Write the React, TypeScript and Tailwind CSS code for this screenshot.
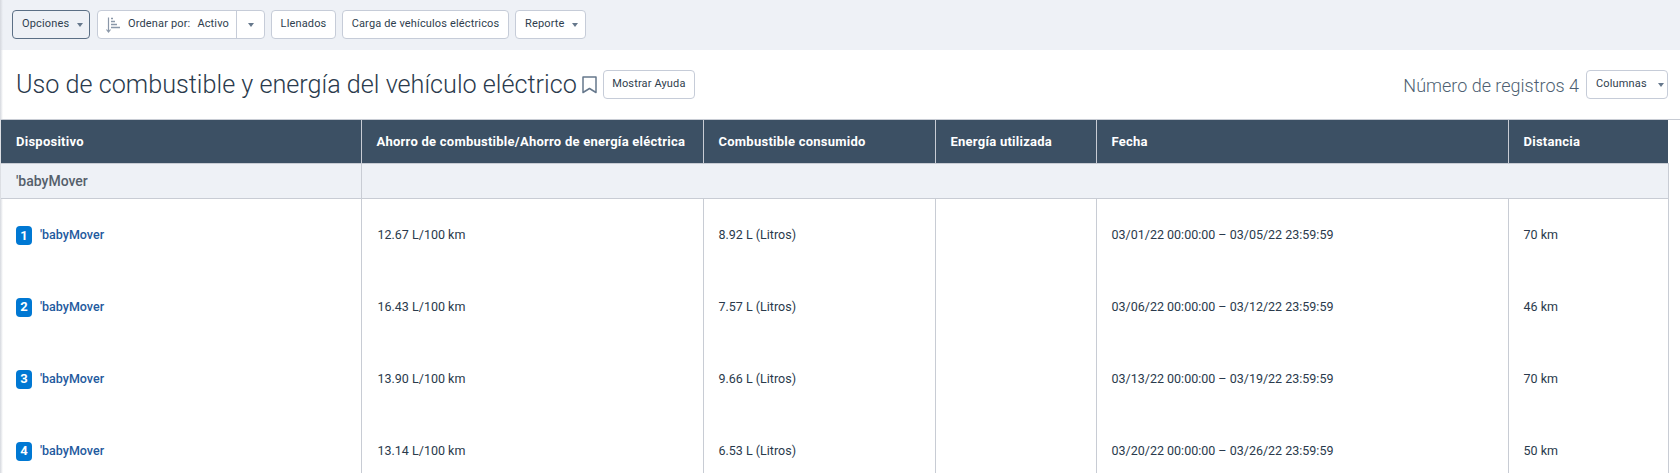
import React from 'react';

const rows = [
  { n: 1, saving: '12.67 L/100 km', used: '8.92 L (Litros)', date: '03/01/22 00:00:00 – 03/05/22 23:59:59', dist: '70 km' },
  { n: 2, saving: '16.43 L/100 km', used: '7.57 L (Litros)', date: '03/06/22 00:00:00 – 03/12/22 23:59:59', dist: '46 km' },
  { n: 3, saving: '13.90 L/100 km', used: '9.66 L (Litros)', date: '03/13/22 00:00:00 – 03/19/22 23:59:59', dist: '70 km' },
  { n: 4, saving: '13.14 L/100 km', used: '6.53 L (Litros)', date: '03/20/22 00:00:00 – 03/26/22 23:59:59', dist: '50 km' },
];

const headers = [
  'Dispositivo',
  'Ahorro de combustible/Ahorro de energía eléctrica',
  'Combustible consumido',
  'Energía utilizada',
  'Fecha',
  'Distancia',
];

const Caret = () => (
  <svg width="6" height="4" viewBox="0 0 6 4" className="shrink-0 text-[#66788c]">
    <path d="M0 0h6L3 4z" fill="currentColor" />
  </svg>
);

const Btn = ({ children, className = '' }: { children: React.ReactNode; className?: string }) => (
  <button className={`h-[29px] flex items-center bg-white border border-[#c6ccd8] rounded-[4px] px-[9px] text-[11px] text-[#2f3e4e] tracking-[0.15px] whitespace-nowrap ${className}`}>
    {children}
  </button>
);

const SortIcon = () => (
  <svg width="14" height="16" viewBox="0 0 14 16" className="text-[#8a97a8]">
    <path d="M2.5 0.5v14M0.5 12.5l2 2.5 2-2.5" fill="none" stroke="currentColor" strokeWidth="1.2" />
    <path d="M5 1.5h2M5 4.5h4M5 7.5h6M5 10.5h9" fill="none" stroke="currentColor" strokeWidth="1.3" />
  </svg>
);

export default function App() {
  return (
    <div className="relative h-[473px] overflow-hidden bg-white text-[#2f3e4e]" style={{ fontFamily: 'Roboto, sans-serif' }}>
      <div className="h-[50px] bg-[#eef1f6] flex items-start gap-[6px] pl-[12px] pt-[10px]">
        <Btn className="w-[78px] !border-[#5b6f85] gap-[8px] !bg-[#eef1f6]">Opciones <Caret /></Btn>
        <div className="h-[29px] w-[168px] ml-[1px] flex items-center bg-white border border-[#c6ccd8] rounded-[4px] text-[11px] tracking-[0.15px]">
          <div className="flex items-center flex-1 pl-[8px] gap-[8px] whitespace-nowrap">
            <SortIcon />
            <span>Ordenar por:</span>
            <span className="-ml-[1px]">Activo</span>
          </div>
          <div className="w-[28px] h-full border-l border-[#c6ccd8] flex items-center justify-center"><Caret /></div>
        </div>
        <Btn className="w-[65px] justify-center !px-0">Llenados</Btn>
        <Btn className="w-[167px] justify-center !px-0">Carga de vehículos eléctricos</Btn>
        <Btn className="w-[71px] gap-[7px]">Reporte <Caret /></Btn>
      </div>

      <div className="h-[70px] flex items-center justify-between pl-[16px] pr-[12px] border-b border-[#c8ccd4]">
        <div className="flex items-center">
          <h1 className="text-[25.2px] font-light text-[#2a3a4c] whitespace-nowrap pt-[1px]">Uso de combustible y energía del vehículo eléctrico</h1>
          <svg width="15" height="18" viewBox="0 0 15 18" className="ml-[5px] mt-[1px] text-[#66788c]">
            <path d="M1 1h13v15.5l-6.5-4-6.5 4z" fill="none" stroke="currentColor" strokeWidth="1.5" strokeLinejoin="round" />
          </svg>
          <Btn className="ml-[6px] w-[92px] justify-center !px-0">Mostrar Ayuda</Btn>
        </div>
        <div className="flex items-center">
          <span className="text-[18px] font-light text-[#4e5f72] whitespace-nowrap pt-[1px]">Número de registros 4</span>
          <Btn className="ml-[7px] w-[82px] gap-[11px]">Columnas <Caret /></Btn>
        </div>
      </div>

      {/* sombra del panel lateral */}
      <div className="absolute left-0 top-0 w-[3px] h-full bg-linear-to-r from-[#d5d8de] to-transparent"></div>

      <table className="relative table-fixed w-[1667px] ml-[1px] border-collapse text-[12.5px]">
        <colgroup>
          <col className="w-[360px]" />
          <col className="w-[342px]" />
          <col className="w-[232px]" />
          <col className="w-[161px]" />
          <col className="w-[412px]" />
          <col className="w-[160px]" />
        </colgroup>
        <thead>
          <tr className="h-[43px] bg-[#3c5064] text-white">
            {headers.map(h => (
              <th key={h} className="text-left text-[13px] tracking-[0.25px] font-bold px-[15px] border-r border-[#c8ccd4] last:border-r-0 whitespace-nowrap">{h}</th>
            ))}
          </tr>
        </thead>
        <tbody>
          <tr className="h-[35px] bg-[#eef1f6] border-t border-b border-[#c8ccd4]">
            <td className="px-[15px] pt-[2px] text-[14px] font-medium text-[#555f6b] border-r border-[#c8ccd4]">'babyMover</td>
            <td colSpan={5} className="border-r border-[#c8ccd4]"></td>
          </tr>
          {rows.map(r => (
            <tr key={r.n} className="h-[72px] text-[#2a3a4c]">
              <td className="px-[15px] pt-[2px] border-r border-[#c8ccd4]">
                <div className="flex items-center gap-[8px]">
                  <span className="w-[16px] h-[19px] rounded-[4px] bg-[#0078d3] text-white text-[13px] font-bold flex items-center justify-center">{r.n}</span>
                  <span className="font-medium text-[#1f5a9e]">'babyMover</span>
                </div>
              </td>
              <td className="pl-[16px] pr-[15px] pt-[2px] border-r border-[#c8ccd4]">{r.saving}</td>
              <td className="px-[15px] pt-[2px] border-r border-[#c8ccd4]">{r.used}</td>
              <td className="px-[15px] pt-[2px] border-r border-[#c8ccd4]"></td>
              <td className="px-[15px] pt-[2px] border-r border-[#c8ccd4]">{r.date}</td>
              <td className="px-[15px] pt-[2px] border-r border-[#c8ccd4]">{r.dist}</td>
            </tr>
          ))}
        </tbody>
      </table>
    </div>
  );
}
